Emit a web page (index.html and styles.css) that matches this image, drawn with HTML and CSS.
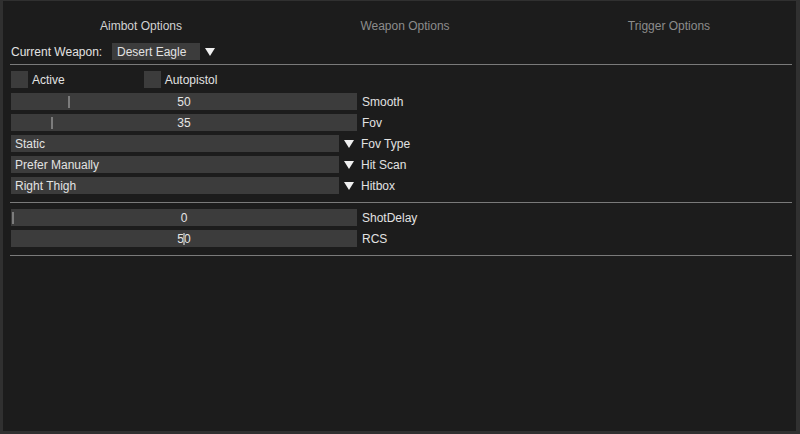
FILE: index.html
```html
<!DOCTYPE html>
<html>
<head>
<meta charset="utf-8">
<link rel="stylesheet" href="styles.css">
</head>
<body>
<div class="window">
  <div class="tabs">
    <div class="tab active">Aimbot Options</div>
    <div class="tab">Weapon Options</div>
    <div class="tab">Trigger Options</div>
  </div>
  <div class="weapon-row">
    <span class="weapon-label">Current Weapon:</span>
    <span class="combo-small">Desert Eagle</span>
    <span class="arrow"></span>
  </div>
  <div class="sep"></div>
  <div class="checks">
    <label class="check"><span class="box"></span>Active</label>
    <label class="check second"><span class="box"></span>Autopistol</label>
  </div>
  <div class="rows">
    <div class="row">
      <div class="slider"><span class="handle" style="left:57px"></span>50</div>
      <span class="label">Smooth</span>
    </div>
    <div class="row">
      <div class="slider"><span class="handle" style="left:40px"></span>35</div>
      <span class="label">Fov</span>
    </div>
    <div class="row">
      <div class="combo">Static</div><span class="arrow"></span>
      <span class="label">Fov Type</span>
    </div>
    <div class="row">
      <div class="combo">Prefer Manually</div><span class="arrow"></span>
      <span class="label">Hit Scan</span>
    </div>
    <div class="row">
      <div class="combo">Right Thigh</div><span class="arrow"></span>
      <span class="label">Hitbox</span>
    </div>
  </div>
  <div class="sep sep2"></div>
  <div class="rows rows2">
    <div class="row">
      <div class="slider"><span class="handle" style="left:1px"></span>0</div>
      <span class="label">ShotDelay</span>
    </div>
    <div class="row">
      <div class="slider"><span class="handle light" style="left:172px"></span>50</div>
      <span class="label">RCS</span>
    </div>
  </div>
  <div class="sep sep3"></div>
</div>
</body>
</html>
```

FILE: styles.css
```css
html, body {
  margin: 0;
  padding: 0;
  background: #2f2f2f;
}
body {
  width: 800px;
  height: 434px;
  overflow: hidden;
  font-family: "Liberation Sans", Arial, sans-serif;
  font-size: 12px;
  color: #e2e2e2;
}
.window {
  box-sizing: border-box;
  width: 800px;
  height: 434px;
  border-style: solid;
  border-color: #303030;
  border-width: 1px 4px 3px 3px;
  background: #1c1c1c;
  padding: 0 0 0 7px;
  overflow: hidden;
}
.tabs {
  display: grid;
  grid-template-columns: 264px 264px 264px;
  margin-left: -1px;
  height: 42px;
  align-items: center;
}
.tab {
  text-align: center;
  color: #8c8c8c;
  padding-top: 8px;
}
.tab.active {
  color: #d2d2d2;
}
.weapon-row {
  display: flex;
  align-items: center;
  height: 17px;
  margin-left: 1px;
}
.weapon-label {
  width: 101px;
}
.combo-small {
  width: 83px;
  height: 17px;
  line-height: 18px;
  padding-left: 5px;
  background: #3c3c3c;
}
.arrow {
  width: 0;
  height: 0;
  border-left: 5px solid transparent;
  border-right: 5px solid transparent;
  border-top: 8px solid #f0f0f0;
  margin-left: 5px;
}
.sep {
  height: 1px;
  width: 782px;
  background: #7a7a7a;
  margin-top: 4px;
}
.checks {
  display: flex;
  margin-top: 6px;
  margin-left: 1px;
  height: 17px;
}
.check {
  display: flex;
  align-items: center;
  gap: 4px;
}
.check.second {
  margin-left: 79px;
}
.box {
  width: 17px;
  height: 17px;
  background: #3c3c3c;
}
.rows {
  display: flex;
  flex-direction: column;
  gap: 4px;
  margin-top: 5px;
  margin-left: 1px;
}
.row {
  display: flex;
  align-items: center;
  height: 17px;
}
.slider {
  position: relative;
  width: 346px;
  height: 17px;
  line-height: 18px;
  background: #3c3c3c;
  text-align: center;
  color: #e6e6e6;
}
.handle {
  position: absolute;
  top: 3px;
  width: 2px;
  height: 12px;
  background: #7c7c7c;
}
.handle.light {
  background: #9a9a9a;
}
.combo {
  width: 324px;
  height: 17px;
  line-height: 18px;
  padding-left: 4px;
  background: #3c3c3c;
}
.row .arrow {
  margin-left: 5px;
}
.label {
  margin-left: 5px;
}
.row .arrow + .label {
  margin-left: 7px;
}
.sep2 {
  margin-top: 8px;
}
.rows2 {
  margin-top: 6px;
}
.sep3 {
  margin-top: 8px;
}
```
